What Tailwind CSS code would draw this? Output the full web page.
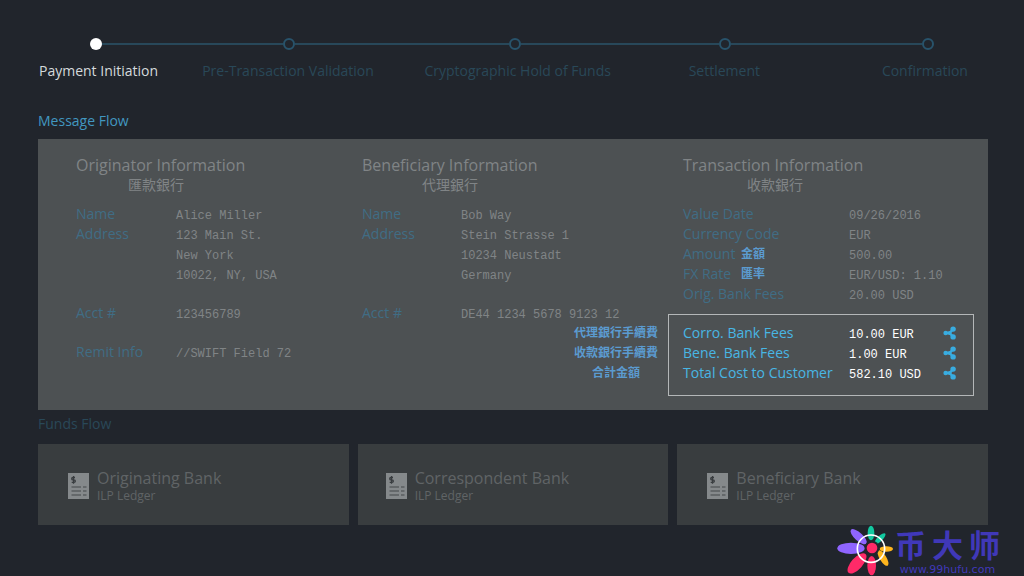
<!DOCTYPE html>
<html lang="en">
<head>
<meta charset="utf-8">
<meta name="viewport" content="width=device-width, initial-scale=1">
<title>Payment Initiation</title>
<script src="https://cdn.jsdelivr.net/npm/@tailwindcss/browser@4"></script>
</head>
<body class="relative min-h-screen overflow-x-hidden bg-[#21252c] font-['Open_Sans','Noto_Sans_CJK_TC',sans-serif] text-sm leading-5 text-[#808486]">

<svg class="hidden" aria-hidden="true">
  <symbol id="ripple" viewBox="0 0 36 36">
    <path d="M7 18H17L26 8M17 18L26 28" fill="none" stroke="#39ace0" stroke-width="6"/>
    <g fill="#39ace0">
      <circle cx="7" cy="18" r="6"/><circle cx="17" cy="18" r="5"/>
      <circle cx="26" cy="8" r="7"/><circle cx="26" cy="28" r="7"/>
    </g>
  </symbol>
  <symbol id="ledger" viewBox="0 0 21 26">
    <path d="M0 0H21V26H0Z" fill="#85898b"/>
    <path d="M7 4.500H5Q3.700 4.500 3.700 5.700T5 6.900H6Q7.300 6.900 7.300 8.100T6 9.300H3.700M5.500 3V10.800" fill="none" stroke="#383c3f" stroke-width="1.300"/>
    <path d="M3.500 14H13M15 14H18.500M3.500 18H13M15 18H18.500M3.500 22H13M15 22H18.500" stroke="#44484b" stroke-width="1.200"/>
  </symbol>
</svg>

<div class="pt-9 pr-9 pl-[38px]">
  <ol class="grid grid-cols-[163fr_222fr_264fr_193fr_107fr] text-[#294858]">
    <li class="text-[#d5dadd]">
      <div class="flex h-4 items-center"><span class="w-[52px]"></span><span class="size-3 rounded-full bg-white"></span><span class="h-0.5 flex-1 bg-[#28485a]"></span></div>
      <p class="mt-[9px] pl-px whitespace-nowrap">Payment Initiation</p>
    </li>
    <li>
      <div class="flex h-4 items-center"><span class="h-0.5 w-[82px] bg-[#28485a]"></span><span class="size-3 rounded-full border-2 border-[#28536b]"></span><span class="h-0.5 flex-1 bg-[#28485a]"></span></div>
      <p class="mt-[9px] pl-px whitespace-nowrap">Pre-Transaction Validation</p>
    </li>
    <li>
      <div class="flex h-4 items-center"><span class="h-0.5 w-[86px] bg-[#28485a]"></span><span class="size-3 rounded-full border-2 border-[#28536b]"></span><span class="h-0.5 flex-1 bg-[#28485a]"></span></div>
      <p class="mt-[9px] pl-px whitespace-nowrap">Cryptographic Hold of Funds</p>
    </li>
    <li>
      <div class="flex h-4 items-center"><span class="h-0.5 w-[31px] bg-[#28485a]"></span><span class="size-3 rounded-full border-2 border-[#28536b]"></span><span class="h-0.5 flex-1 bg-[#28485a]"></span></div>
      <p class="mt-[9px] pl-px whitespace-nowrap">Settlement</p>
    </li>
    <li>
      <div class="flex h-4 items-center"><span class="h-0.5 w-[41px] bg-[#28485a]"></span><span class="size-3 rounded-full border-2 border-[#28536b]"></span></div>
      <p class="mt-[9px] pl-px whitespace-nowrap">Confirmation</p>
    </li>
  </ol>

  <h2 class="mt-[30px] text-[#4197c0]">Message Flow</h2>
  <section class="mt-2 grid grid-cols-[286fr_306fr_306fr] bg-[#4d5153] pt-4 pr-3.5 pb-3.5 pl-[38px]">
    <div>
      <h3 class="text-base leading-5">Originator Information</h3>
      <p class="pl-[52px]">匯款銀行</p>
      <dl class="mt-[9px] grid grid-cols-[100px_1fr] [&>dd]:pt-0.5 [&>dd]:-mb-0.5 [&>dd]:font-['Liberation_Mono',monospace] [&>dd]:text-xs/5 [&>dt]:text-[#406d85]">
        <dt>Name</dt><dd>Alice Miller</dd>
        <dt>Address</dt><dd>123 Main St.<br>New York<br>10022, NY, USA</dd>
        <dt class="mt-[19px]">Acct #</dt><dd class="mt-[19px]">123456789</dd>
        <dt class="mt-[19px]">Remit Info</dt><dd class="mt-[19px]">//SWIFT Field 72</dd>
      </dl>
    </div>
    <div>
      <h3 class="text-base leading-5">Beneficiary Information</h3>
      <p class="pl-[60px]">代理銀行</p>
      <dl class="mt-[9px] grid grid-cols-[99px_1fr] [&>dd]:pt-0.5 [&>dd]:-mb-0.5 [&>dd]:font-['Liberation_Mono',monospace] [&>dd]:text-xs/5 [&>dt]:text-[#406d85]">
        <dt>Name</dt><dd>Bob Way</dd>
        <dt>Address</dt><dd>Stein Strasse 1<br>10234 Neustadt<br>Germany</dd>
        <dt class="mt-[19px]">Acct #</dt><dd class="mt-[19px]">DE44 1234 5678 9123 12</dd>
      </dl>
      <div class="flex justify-end pr-2.5">
        <p class="text-center text-xs/5 font-bold text-[#5b9bd0]">代理銀行手續費<br>收款銀行手續費<br>合計金額</p>
      </div>
    </div>
    <div>
      <div class="pl-[15px]">
        <h3 class="text-base leading-5">Transaction Information</h3>
        <p class="pl-16">收款銀行</p>
        <dl class="mt-[9px] grid grid-cols-[166px_1fr] [&>dd]:pt-0.5 [&>dd]:-mb-0.5 [&>dd]:font-['Liberation_Mono',monospace] [&>dd]:text-xs/5 [&>dt]:text-[#406d85]">
          <dt>Value Date</dt><dd>09/26/2016</dd>
          <dt>Currency Code</dt><dd>EUR</dd>
          <dt class="flex"><span class="w-[58px]">Amount</span><span class="text-xs/5 font-bold text-[#5b9bd0]">金額</span></dt><dd>500.00</dd>
          <dt class="flex"><span class="w-[58px]">FX Rate</span><span class="text-xs/5 font-bold text-[#5b9bd0]">匯率</span></dt><dd>EUR/USD: 1.10</dd>
          <dt>Orig. Bank Fees</dt><dd>20.00 USD</dd>
        </dl>
      </div>
      <dl class="mt-2.5 grid grid-cols-[166px_1fr] border border-[#b4b7b8] pt-2 pr-4 pb-3 pl-3.5 [&>dd]:flex [&>dd]:items-center [&>dd]:justify-between [&>dd]:pt-0.5 [&>dd]:-mb-0.5 [&>dd]:font-['Liberation_Mono',monospace] [&>dd]:text-xs/5 [&>dd]:text-white [&>dt]:text-[#48b6e4]">
        <dt>Corro. Bank Fees</dt><dd>10.00 EUR <svg class="mb-1 size-3.5"><use href="#ripple"/></svg></dd>
        <dt>Bene. Bank Fees</dt><dd>1.00 EUR <svg class="mb-1 size-3.5"><use href="#ripple"/></svg></dd>
        <dt>Total Cost to Customer</dt><dd>582.10 USD <svg class="mb-1 size-3.5"><use href="#ripple"/></svg></dd>
      </dl>
    </div>
  </section>

  <h2 class="mt-1 text-[#294858]">Funds Flow</h2>
  <section class="mt-2.5 grid grid-cols-3 gap-[9px] text-[#606466]">
    <article class="flex items-center gap-2 bg-[#393d3f] pt-6 pb-[21px] pl-[30px]">
      <svg class="h-[26px] w-[21px]"><use href="#ledger"/></svg>
      <div><h3 class="text-base leading-5">Originating Bank</h3><p class="text-xs/4">ILP Ledger</p></div>
    </article>
    <article class="flex items-center gap-2 bg-[#393d3f] pt-6 pb-[21px] pl-7">
      <svg class="h-[26px] w-[21px]"><use href="#ledger"/></svg>
      <div><h3 class="text-base leading-5">Correspondent Bank</h3><p class="text-xs/4">ILP Ledger</p></div>
    </article>
    <article class="flex items-center gap-2 bg-[#393d3f] pt-6 pb-[21px] pl-[30px]">
      <svg class="h-[26px] w-[21px]"><use href="#ledger"/></svg>
      <div><h3 class="text-base leading-5">Beneficiary Bank</h3><p class="text-xs/4">ILP Ledger</p></div>
    </article>
  </section>
</div>

<a href="http://www.99hufu.com" class="absolute right-6 bottom-0 flex items-end gap-px text-[#4038b8]">
  <svg class="h-[51px] w-[57px]" viewBox="20 15 171 153" aria-hidden="true">
    <ellipse cx="122" cy="39" rx="10" ry="22" fill="#12c9a0"/>
    <ellipse cx="149" cy="56" rx="8" ry="22" fill="#12c9a0" transform="rotate(45 149 56)"/>
    <ellipse cx="168" cy="87" rx="20" ry="8" fill="#ffb61e"/>
    <ellipse cx="158" cy="114" rx="10" ry="27" fill="#ffb61e" transform="rotate(-32 158 114)"/>
    <ellipse cx="124" cy="137" rx="13" ry="29" fill="#ff2a68"/>
    <ellipse cx="80" cy="130" rx="17" ry="38" fill="#ff2a68" transform="rotate(42 80 130)"/>
    <ellipse cx="62" cy="85" rx="41" ry="17" fill="#8f65ff"/>
    <ellipse cx="85" cy="50" rx="12" ry="31" fill="#8f65ff" transform="rotate(-48 85 50)"/>
    <circle cx="125" cy="84" r="22" fill="#21252c"/>
    <circle cx="125" cy="84" r="16" fill="#ff2a68"/>
    <circle cx="122" cy="86" r="41" fill="none" stroke="#fff" stroke-width="5"/>
  </svg>
  <span class="flex flex-col">
    <span class="flex gap-1.5 font-['Noto_Sans_CJK_SC',sans-serif] text-[31px] leading-8 font-bold" lang="zh-CN"><span>币</span><span>大</span><span>师</span></span>
    <span class="pt-1 text-center font-['DejaVu_Sans',sans-serif] text-[11px] leading-3">www.99hufu.com</span>
  </span>
</a>
</body>
</html>
